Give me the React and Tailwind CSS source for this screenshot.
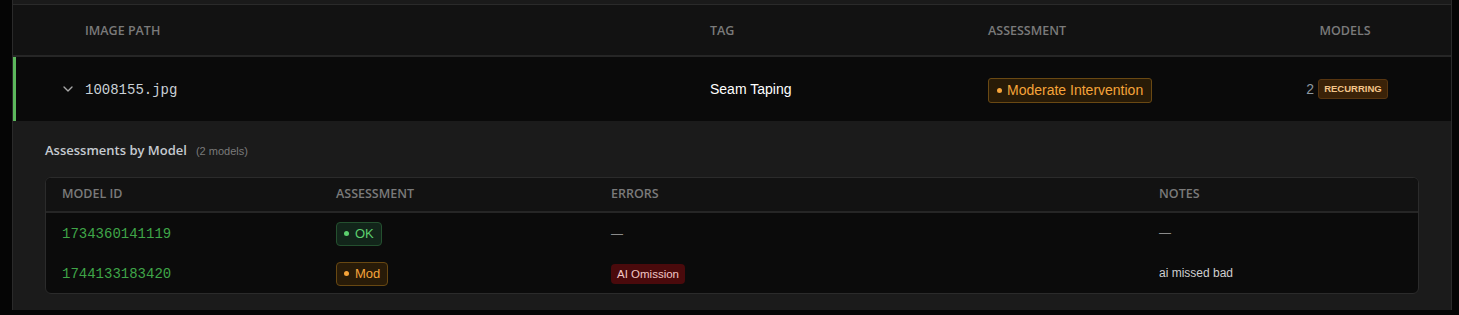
import { ChevronDown } from "lucide-react";

const MODEL_ROWS = [
  { id: "1734360141119", status: "ok", errors: null, notes: null },
  { id: "1744133183420", status: "mod", errors: ["AI Omission"], notes: "ai missed bad" },
];

const SANS = "font-['Liberation_Sans',Arial,sans-serif]";
const HEAD = "font-['Open_Sans',sans-serif] text-[12.5px] font-semibold uppercase text-[#7a7a7a]";
const MONO = "font-['Liberation_Mono','Courier_New',monospace]";

function StatusBadge({ status }) {
  if (status === "ok") {
    return (
      <span className="inline-flex h-[24px] items-center gap-[6px] rounded-[4px] border border-[#24502f] bg-[#12251a] px-[7px] text-[13px] text-[#5ccf6e]">
        <span className="h-[5px] w-[5px] rounded-full bg-[#5ccf6e]" />
        OK
      </span>
    );
  }
  return (
    <span className="inline-flex h-[24px] items-center gap-[6px] rounded-[4px] border border-[#684812] bg-[#281b08] px-[7px] text-[13px] text-[#f5a43a]">
      <span className="h-[5px] w-[5px] rounded-full bg-[#f5a43a]" />
      Mod
    </span>
  );
}

export default function App() {
  return (
    <div className={`min-h-[315px] w-full bg-[#050505] ${SANS}`}>
      <div className="ml-[12px] w-[1440px] border-x border-[#2a2a2a] bg-[#121212]">
        <div className="h-[5px] border-b border-[#2a2a2a] bg-[#1a1a1a]" />

        {/* header */}
        <div className={`flex h-[52px] items-center border-b-2 border-[#262626] bg-[#121212] pt-[2px] ${HEAD}`}>
          <div className="w-[72px]" />
          <div className="w-[625px]">Image Path</div>
          <div className="w-[278px]">Tag</div>
          <div className="w-[290px]">Assessment</div>
          <div className="w-[134px] text-center">Models</div>
        </div>

        {/* data row */}
        <div className="flex h-[64px] items-center border-l-[3px] border-[#5cb85c] bg-[#0a0a0a]">
          <div className="flex w-[69px] justify-end pr-[9px]">
            <ChevronDown size={16} strokeWidth={2} className="text-[#a8a8a8]" />
          </div>
          <div className={`w-[625px] pt-[3px] text-[14px] text-[#c9d0d6] ${MONO}`}>1008155.jpg</div>
          <div className="w-[278px] text-[14px] text-white">Seam Taping</div>
          <div className="w-[290px]">
            <span className="inline-flex h-[25px] items-center gap-[5px] rounded-[3px] border border-[#6a4913] bg-[#281b07] px-[8px] text-[14px] text-[#f5a43a]">
              <span className="h-[5px] w-[5px] rounded-full bg-[#f5a43a]" />
              Moderate Intervention
            </span>
          </div>
          <div className="flex w-[134px] items-center justify-center gap-[4px] pl-[4px]">
            <span className="text-[14px] text-[#8e98a0]">2</span>
            <span className="inline-flex h-[20px] items-center rounded-[3px] border border-[#573510] bg-[#3a2208] px-[5px] text-[9.5px] font-bold uppercase text-[#f3c58a]">
              Recurring
            </span>
          </div>
        </div>

        {/* expanded */}
        <div className="bg-[#1b1b1b] px-[32px] pb-[16px] pt-[20px]">
          <div className="flex items-baseline gap-[9px]">
            <span className="font-['Open_Sans',sans-serif] text-[13px] font-semibold text-[#c5cad0]">Assessments by Model</span>
            <span className="text-[11px] text-[#7a7a7a]">(2 models)</span>
          </div>

          <div className="mt-[16px] overflow-hidden rounded-[6px] border border-[#2b2b2b] bg-[#0b0b0b]">
            <div className={`flex h-[35px] items-center border-b-2 border-[#262626] bg-[#121212] pl-[16px] pt-[1px] ${HEAD}`}>
              <div className="w-[274px]">Model ID</div>
              <div className="w-[275px]">Assessment</div>
              <div className="w-[548px]">Errors</div>
              <div>Notes</div>
            </div>
            {MODEL_ROWS.map((row) => (
              <div key={row.id} className="flex h-[40px] items-center pl-[16px]">
                <div className={`w-[274px] pt-[3px] text-[14px] text-[#3fa548] ${MONO}`}>{row.id}</div>
                <div className="w-[275px]">
                  <StatusBadge status={row.status} />
                </div>
                <div className="w-[548px]">
                  {row.errors ? (
                    row.errors.map((e) => (
                      <span key={e} className="inline-flex h-[20px] items-center rounded-[4px] bg-[#4a0a0c] px-[6px] text-[11.5px] text-[#f2c6c6]">
                        {e}
                      </span>
                    ))
                  ) : (
                    <span className="text-[12px] text-[#8a8a8a]">—</span>
                  )}
                </div>
                <div className="text-[12px] text-[#cfcfcf]">
                  {row.notes ? row.notes : <span className="text-[12px] text-[#8a8a8a]">—</span>}
                </div>
              </div>
            ))}
          </div>
        </div>
      </div>
    </div>
  );
}
